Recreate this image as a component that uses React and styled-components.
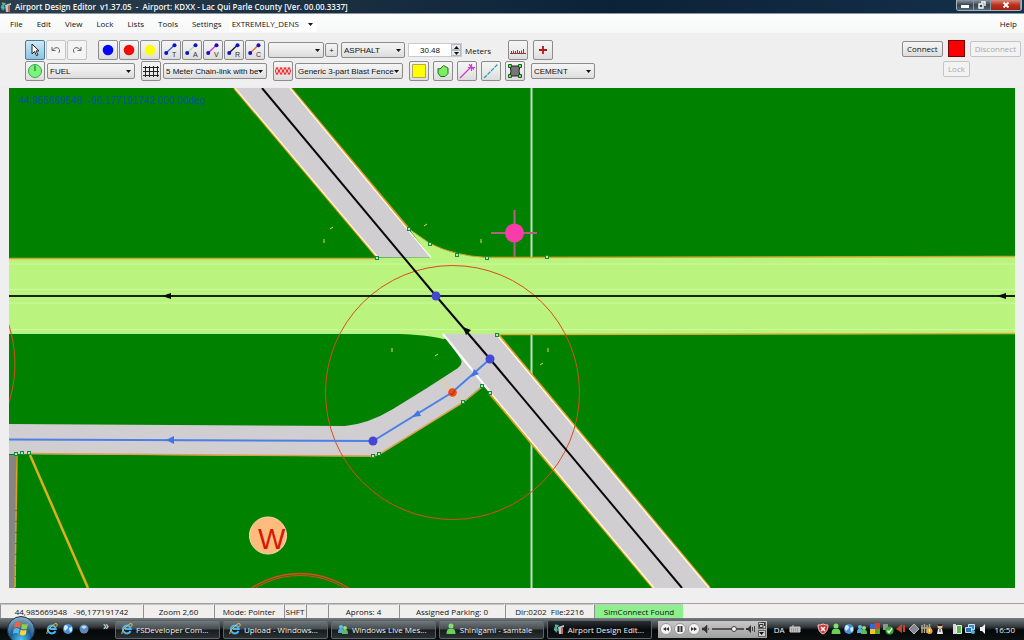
import React, { useState } from 'react'
import styled, { createGlobalStyle, css } from 'styled-components'

const menuItems = ['File', 'Edit', 'View', 'Lock', 'Lists', 'Tools', 'Settings']

const linkTools = [
  { letter: 'T', color: '#2f62ee' },
  { letter: 'A', color: '#9fe29f' },
  { letter: 'V', color: '#d030d8' },
  { letter: 'R', color: '#101020' },
  { letter: 'C', color: '#f06030' },
]

const nodeTools = [
  { name: 'Blue node', color: '#0505f5' },
  { name: 'Red node', color: '#f80505' },
  { name: 'Yellow node', color: '#fdfd05' },
]

const tasks = [
  { text: 'FSDeveloper Com...', icon: 'ie' },
  { text: 'Upload - Windows...', icon: 'ie' },
  { text: 'Windows Live Mes...', icon: 'people' },
  { text: 'Shinigami - samtale', icon: 'person' },
  { text: 'Airport Design Edit...', icon: 'app', active: true },
]

const handles = [
  [409, 229], [430, 244], [457, 255], [487, 258], [547, 257], [377, 258],
  [497, 335], [482, 386], [490, 393], [463, 402], [373, 456], [379, 454],
  [16, 454], [22, 453], [29, 453],
]

const nodes = [[436, 296], [490, 359], [373, 441]]

const ticks = [
  'M324 239v4', 'M330 229l3-2', 'M424 226l3-2', 'M481 239v4',
  'M392 348v4', 'M435 356l3-2', 'M548 348v4', 'M540 365l3-2',
]

export default function App() {
  const [width, setWidth] = useState('30.48')

  return (
    <Window>
      <GlobalStyle />
      <TitleBar>
        <AppIcon />
        <Title>Airport Design Editor&nbsp; v1.37.05&nbsp; -&nbsp; Airport: KDXX - Lac Qui Parle County [Ver. 00.00.3337]</Title>
        <WindowButtons>
          <WindowButton aria-label='Minimize'>
            <svg width='8' height='8' viewBox='0 0 8 8'><path d='M0 4h8v3H0z' fill='#fff' /></svg>
          </WindowButton>
          <WindowButton aria-label='Restore'>
            <svg width='8' height='8' viewBox='0 0 8 8'>
              <path d='M3 1h4v4M1 3h4v4H1z' fill='none' stroke='#fff' strokeWidth='1.4' />
            </svg>
          </WindowButton>
          <WindowButton aria-label='Close' $close>
            <svg width='8' height='8' viewBox='0 0 8 8'>
              <path d='M1.5 1.5l5 5M6.5 1.5l-5 5' stroke='#fff' strokeWidth='1.8' />
            </svg>
          </WindowButton>
        </WindowButtons>
      </TitleBar>

      <MenuBar>
        {menuItems.map((el) => (
          <MenuButton key={el}>{el}</MenuButton>
        ))}
        <Combo label='Scenery density' value='EXTREMELY_DENS' width={88} flat />
        <Spacer />
        <MenuButton>Help</MenuButton>
      </MenuBar>

      <ToolBar>
        <ToolRows>
          <ToolRow $gap={3}>
            <Group $gap={1}>
              <ToolButton aria-label='Pointer' $active>
                <svg width='12' height='14' viewBox='0 0 12 14'>
                  <path d='M3 1v10l2.5-2.500 2 4.200 1.500-.8-2-4h3z' fill='#fff' stroke='#222' strokeWidth='1' />
                </svg>
              </ToolButton>
              <ToolButton aria-label='Undo' $pale>
                <svg width='12' height='12' viewBox='0 0 12 12'>
                  <path d='M2 3v3.500h3.500M2.500 6C5 2.500 10 3 9.500 7c-.1 1-.5 1.600-1 2' fill='none' stroke='#666' />
                </svg>
              </ToolButton>
              <ToolButton aria-label='Redo' $pale>
                <svg width='12' height='12' viewBox='0 0 12 12'>
                  <path d='M10 3v3.500H6.500M9.500 6C7 2.500 2 3 2.500 7c.1 1 .5 1.600 1 2' fill='none' stroke='#666' />
                </svg>
              </ToolButton>
            </Group>
            <NodeGroup $gap={1}>
              {nodeTools.map((el) => (
                <ToolButton key={el.name} aria-label={el.name}>
                  <svg width='12' height='12' viewBox='0 0 12 12'>
                    <circle cx='6' cy='6' r='5.3' fill={el.color} />
                  </svg>
                </ToolButton>
              ))}
              {linkTools.map((el) => (
                <ToolButton key={el.letter} aria-label={'Link ' + el.letter}>
                  <svg width='16' height='16' viewBox='0 0 16 16'>
                    <path d='M3 11l8-7.500' stroke={el.color} strokeWidth='1.3' />
                    <circle cx='3.2' cy='11' r='2' fill='#1010c8' />
                    <circle cx='11.5' cy='3.2' r='2' fill='#1010c8' />
                    <text x='9' y='15' fontSize='7' fill='#333' fontFamily='Liberation Sans, sans-serif'>{el.letter}</text>
                  </svg>
                </ToolButton>
              ))}
            </NodeGroup>
            <Group $gap={1}>
              <Combo label='Name' value='' width={56} />
              <SmallButton aria-label='Add name'>+</SmallButton>
            </Group>
            <Combo label='Surface' value='ASPHALT' width={64} />
            <Group $gap={3}>
              <Spinner>
                <SpinnerInput id='width' value={width} onChange={(e) => setWidth(e.target.value)} />
                <SpinnerArrows>
                  <ArrowButton aria-label='Increase'><Triangle up /></ArrowButton>
                  <ArrowButton aria-label='Decrease'><Triangle /></ArrowButton>
                </SpinnerArrows>
              </Spinner>
              <label htmlFor='width'>Meters</label>
            </Group>
            <RulerGroup $gap={5}>
              <ToolButton aria-label='Ruler'>
                <svg width='16' height='14' viewBox='0 0 16 14'>
                  <path d='M0 10.500h16M1.500 10V8M3.500 10V7.500M5.500 10V8M7.500 10V7M9.500 10V8M11.500 10V7.500M13.500 10V6' stroke='#a83030' fill='none' />
                </svg>
              </ToolButton>
              <ToolButton aria-label='Cross'>
                <svg width='12' height='12' viewBox='0 0 12 12'>
                  <path d='M6 2v8M2 6h8' stroke='#b01818' strokeWidth='1.8' />
                </svg>
              </ToolButton>
            </RulerGroup>
          </ToolRow>

          <ToolRow $gap={6}>
            <Group $gap={2}>
              <ToolButton aria-label='Parking'>
                <svg width='16' height='16' viewBox='0 0 16 16'>
                  <circle cx='8' cy='8' r='6.5' fill='#7bf47b' stroke='#3aa84a' />
                  <path d='M8 8V2.500' stroke='#186028' />
                </svg>
              </ToolButton>
              <Combo label='Parking type' value='FUEL' width={88} />
            </Group>
            <Group $gap={2}>
              <ToolButton aria-label='Fence'>
                <svg width='16' height='14' viewBox='0 0 16 14'>
                  <path d='M0 3.500h16M0 7.500h16M0 11.500h16M2.500 2v11M6.500 2v11M10.500 2v11M14.500 2v11' stroke='#222' />
                </svg>
              </ToolButton>
              <Combo label='Fence type' value='5 Meter Chain-link with be' width={104} />
            </Group>
            <Group $gap={2}>
              <ToolButton aria-label='Blast fence'>
                <svg width='16' height='8' viewBox='0 0 16 8'>
                  <path d='M0 0h16v8H0z' fill='#fac4c4' />
                  <path d='M1 1.500h15M1 6.500h15' stroke='#e83434' strokeWidth='2' strokeDasharray='2 2' />
                  <path d='M-1 4h17' stroke='#e83434' strokeWidth='3' strokeDasharray='2 2' />
                </svg>
              </ToolButton>
              <Combo label='Blast fence type' value='Generic 3-part Blast Fence' width={108} />
            </Group>
            <Group $gap={4}>
              <ToolButton aria-label='Filled area'>
                <svg width='16' height='16' viewBox='0 0 16 16'><path d='M1.500 1.500h13v13h-13z' fill='#ffff00' stroke='#b0a860' /></svg>
              </ToolButton>
              <ToolButton aria-label='Polygon'>
                <svg width='16' height='16' viewBox='0 0 16 16'>
                  <path d='M3 5.500l2 .5 3.500-3.500L13 5v5.500L10 13.500H5.500L3 10z' fill='#7af060' stroke='#2a6a20' />
                </svg>
              </ToolButton>
              <ToolButton aria-label='Line'>
                <svg width='16' height='16' viewBox='0 0 16 16'>
                  <path d='M1 15L12 4M9 4.500h7M12.500 1v7M10 1.500l5 5' stroke='#cf35d5' fill='none' strokeWidth='1.2' />
                </svg>
              </ToolButton>
              <ToolButton aria-label='Dashed line'>
                <svg width='16' height='16' viewBox='0 0 16 16'>
                  <path d='M1 15L15 1' stroke='#2aa0a8' strokeWidth='1.3' strokeDasharray='4 1' />
                </svg>
              </ToolButton>
              <ToolButton aria-label='Apron'>
                <svg width='16' height='16' viewBox='0 0 16 16'>
                  <path d='M3 3h10l-1 5 1 5H3l1-5z' fill='#777' stroke='#222' />
                  <path d='M1.500 1.500h3v3h-3zM11.500 1.500h3v3h-3zM1.500 11.500h3v3h-3zM11.500 11.500h3v3h-3z' fill='#80d080' stroke='#186018' />
                </svg>
              </ToolButton>
            </Group>
            <Combo label='Apron surface' value='CEMENT' width={64} />
          </ToolRow>
        </ToolRows>

        <ConnectPanel>
          <ToolRow $gap={5}>
            <PushButton>Connect</PushButton>
            <ConnectionState />
            <PushButton disabled>Disconnect</PushButton>
          </ToolRow>
          <LockRow>
            <PushButton disabled>Lock</PushButton>
          </LockRow>
        </ConnectPanel>
      </ToolBar>

      <MapArea>
        <AirportMap />
      </MapArea>

      <StatusBar>
        <StatusCell $width={142}>44,985669548&nbsp;&nbsp; -96,177191742</StatusCell>
        <StatusCell $width={70}>Zoom 2,60</StatusCell>
        <StatusCell $width={69}>Mode: Pointer</StatusCell>
        <StatusCell $width={21}>SHFT</StatusCell>
        <StatusCell $width={21} />
        <StatusCell $width={70}>Aprons: 4</StatusCell>
        <StatusCell $width={105}>Assigned Parking: 0</StatusCell>
        <StatusCell $width={88}>Dir:0202&nbsp; File:2216</StatusCell>
        <StatusCell $width={89} $found>SimConnect Found</StatusCell>
      </StatusBar>

      <TaskBar>
        <StartButton aria-label='Start'>
          <svg width='28' height='24' viewBox='0 0 28 24'>
            <defs>
              <radialGradient id='orb' cx='.5' cy='.85' r='.8'>
                <stop offset='0' stopColor='#48c8f0' />
                <stop offset='.5' stopColor='#1d5c92' />
                <stop offset='1' stopColor='#8aa8bc' />
              </radialGradient>
            </defs>
            <circle cx='14' cy='14' r='13.5' fill='url(#orb)' stroke='#14344e' />
            <path d='M8 7q3-2 6 0l-1 5q-3-2-6 0z' fill='#f0623a' />
            <path d='M15 7.500q3 2 6 0l-1 5q-3 2-6 0z' fill='#8fd04a' />
            <path d='M6.700 13q3-2 6 0l-1 5q-3-2-6 0z' fill='#52b4f0' />
            <path d='M13.700 13.500q3 2 6 0l-1 5q-3 2-6 0z' fill='#ffd23c' />
          </svg>
        </StartButton>
        <QuickLaunch>
          <TrayIcon name='ie' />
          <TrayIcon name='globe' />
          <TrayIcon name='disc' />
          <More>»</More>
        </QuickLaunch>
        <Tasks>
          {tasks.map((el) => (
            <TaskButton key={el.text} $active={el.active}>
              {el.icon === 'app' ? <AppIcon /> : <TrayIcon name={el.icon} />}
              <TaskText>{el.text}</TaskText>
            </TaskButton>
          ))}
        </Tasks>
        <Player>
          <RoundButton aria-label='Previous'>
            <svg width='8' height='8' viewBox='0 0 8 8'><path d='M4 2v4L1 4zM7 2v4L4 4z' fill='#333' /></svg>
          </RoundButton>
          <RoundButton aria-label='Pause'>
            <svg width='8' height='8' viewBox='0 0 8 8'><path d='M1.500 1h2v6h-2zM4.500 1h2v6h-2z' fill='#333' /></svg>
          </RoundButton>
          <RoundButton aria-label='Next'>
            <svg width='8' height='8' viewBox='0 0 8 8'><path d='M1 2v4l3-2zM4 2v4l3-2z' fill='#333' /></svg>
          </RoundButton>
          <svg width='8' height='8' viewBox='0 0 8 8'>
            <path d='M0 3h2l3-3v8L2 5H0zM6.500 3v2' fill='#333' stroke='#333' strokeWidth='.6' />
          </svg>
          <Volume type='range' aria-label='Volume' defaultValue='75' />
          <svg width='10' height='8' viewBox='0 0 10 8'>
            <path d='M0 3h2l3-3v8L2 5H0z' fill='#333' />
            <path d='M6.500 2v4M8.500 1v6' stroke='#444' fill='none' />
          </svg>
          <PlayerCorner>
            <CornerButton aria-label='Restore player'>
              <svg width='6' height='6' viewBox='0 0 6 6'><path d='M2 .5h3.500V4M.5 2.500H4v3H.5z' fill='none' stroke='#333' /></svg>
            </CornerButton>
            <CornerButton aria-label='Player menu'><Triangle /></CornerButton>
          </PlayerCorner>
        </Player>
        <Language>DA</Language>
        <Keyboard width='12' height='8' viewBox='0 0 12 8'>
          <path d='M1 2h10v5H1zM4 2V0' fill='#bbb' stroke='#ccc' />
          <path d='M2 4h8M2 6h8' stroke='#888' strokeDasharray='1 1' />
        </Keyboard>
        <Tray>
          {['shield', 'person', 'globe', 'people', 'windows', 'check', 'horn', 'diamond', 'fence', 'penguin'].map((el) => (
            <TrayIcon key={el} name={el} />
          ))}
        </Tray>
        <Tray>
          {['battery', 'network', 'speaker'].map((el) => (
            <TrayIcon key={el} name={el} />
          ))}
        </Tray>
        <Clock>16:50</Clock>
      </TaskBar>
    </Window>
  )
}

function Combo({ label, value, width, flat }) {
  return (
    <ComboBox $width={width} $flat={flat}>
      <ComboSelect aria-label={label} defaultValue={value}>
        <option value={value}>{value}</option>
      </ComboSelect>
      <ComboArrow><Triangle /></ComboArrow>
    </ComboBox>
  )
}

function Triangle({ up }) {
  return (
    <svg width='5' height='3' viewBox='0 0 5 3'>
      <path d={up ? 'M0 3h5L2.500 0z' : 'M0 0h5L2.500 3z'} fill='#111' />
    </svg>
  )
}

function AppIcon() {
  return (
    <svg width='12' height='12' viewBox='0 0 12 12'>
      <path d='M1 5q2-4 5-3l-2 3 1 2-2 3z' fill='#49a7b8' />
      <path d='M2 2l3 1M1 7l3-1' stroke='#58c070' strokeWidth='1.5' />
      <path d='M5 4l6-2v2L8 5v6H6z' fill='#b8c8d0' />
      <path d='M8 5h2v6H8z' fill='#d8603c' />
    </svg>
  )
}

function TrayIcon({ name }) {
  return (
    <svg width='12' height='12' viewBox='0 0 12 12'>
      {name === 'ie' && (
        <>
          <path d='M9.500 8A4 4 0 1 1 9.800 6H4' fill='none' stroke='#4cb4f0' strokeWidth='2' />
          <path d='M1 11Q0 9 5 4t6-3q.5.800-.5 2.500' fill='none' stroke='#f0c040' />
        </>
      )}
      {name === 'globe' && (
        <>
          <circle cx='6' cy='6' r='5' fill='#4a92d8' />
          <path d='M3 2q3 0 3 3l-3 3Q1 5 3 2zM7 5l3-1v4L8 9z' fill='#d4ecff' />
        </>
      )}
      {name === 'disc' && (
        <>
          <circle cx='6' cy='6' r='4.5' fill='#5d89b4' />
          <path d='M3 4q3-3 6 0L6 6z' fill='#c4dcf0' />
        </>
      )}
      {name === 'people' && (
        <>
          <circle cx='4' cy='4' r='2' fill='#6ac0e8' />
          <path d='M1 10q0-5 3-4 3-1 3 4z' fill='#5aa8d8' />
          <circle cx='8' cy='5' r='2' fill='#8fe080' />
          <path d='M5 11q0-5 3-4 3-1 3 4z' fill='#58c058' />
        </>
      )}
      {name === 'person' && (
        <>
          <circle cx='6' cy='3' r='2.5' fill='#84e070' />
          <path d='M1.500 11q0-6 4.500-5 4.500-1 4.500 5z' fill='#6ad058' />
        </>
      )}
      {name === 'shield' && (
        <>
          <path d='M1 2q3 0 5-1 2 1 5 1 0 7-5 9Q1 9 1 2z' fill='#d83434' stroke='#e8c8c8' />
          <path d='M4 4l4 4M8 4L4 8' stroke='#fff' strokeWidth='1.5' />
        </>
      )}
      {name === 'windows' && (
        <>
          <path d='M1 1h5v5H1z' fill='#3868d8' />
          <path d='M6 0h5v6H6z' fill='#e03c24' />
          <path d='M1 6h5v5H1z' fill='#f4c420' />
          <path d='M6 6h5v5H6z' fill='#48a838' />
        </>
      )}
      {name === 'check' && (
        <>
          <path d='M1 1h5v6H1z' fill='#8a9a8a' />
          <circle cx='7.5' cy='7.5' r='4' fill='#38a838' />
          <path d='M5.500 7.500l1.500 2 3-4' fill='none' stroke='#fff' strokeWidth='1.3' />
        </>
      )}
      {name === 'horn' && <path d='M1 6l6-5v9zM8 2h2v7H8z' fill='#c84428' />}
      {name === 'diamond' && <path d='M6 1l5 5-5 5-5-5z' fill='#858a90' stroke='#b0b4b8' />}
      {name === 'fence' && (
        <>
          <path d='M1 2v8M3.500 1v9M6 2v8M8.500 1v9M0 5h10' stroke='#b0a890' strokeWidth='1.5' />
          <circle cx='8.5' cy='8' r='3' fill='#f0a830' />
          <path d='M8.500 6v3' stroke='#fff' />
        </>
      )}
      {name === 'penguin' && (
        <>
          <circle cx='6' cy='3.5' r='2.5' fill='#e8c090' />
          <path d='M4 6h4l1 5H3z' fill='#e8e8e8' />
          <path d='M4 1h4v2H4zM5.500 6h1v3h-1z' fill='#302820' />
        </>
      )}
      {name === 'battery' && (
        <>
          <path d='M2 1h3v10H2z' fill='#d8d8d8' />
          <path d='M5.500 2.500h5v8h-5z' fill='#58b848' stroke='#eee' />
        </>
      )}
      {name === 'network' && (
        <>
          <path d='M4.500 1.500h6v5h-6z' fill='#3490d0' stroke='#cde' />
          <path d='M1.500 4.500h6v5h-6z' fill='#2870b8' stroke='#cde' />
          <circle cx='9' cy='9' r='2' fill='#40b8d8' />
        </>
      )}
      {name === 'speaker' && <path d='M3 4h2l3-3v10L5 8H3z' fill='#f0f0f0' />}
    </svg>
  )
}

function AirportMap() {
  return (
    <MapSvg viewBox='9 88 1006 500' preserveAspectRatio='xMidYMid slice' role='img' aria-label='Airport map'>
      <text x='18' y='104' fontSize='10' fill='#0052a0' fontFamily='Liberation Sans, sans-serif'>
        44,985669548&#160;&#160;-96,177191742 000,00deg
      </text>

      {/* meridian */}
      <path d='M531.500 88v500' stroke='#c4dcc4' strokeWidth='2' />

      {/* runway with its fillets */}
      <path d='M9 258.500L377 258L431 257.500L409 229L430 243.500Q455 256 487 257.500L1015 256.500V334H500l-57 5q-14-4-43-5H9z' fill='#baf47f' />
      <path d='M9 264h1006M9 289.500h1006M9 303h1006M9 329.500h1006' stroke='#ccfa9e' fill='none' />
      <path d='M9 258.500h368M487 257.500l528-1' stroke='#c8a828' fill='none' strokeWidth='1.4' />
      <path d='M409 229L430 243.500Q455 256 487 257.500' stroke='#d0a020' fill='none' />
      <path d='M498 334.500l517-1' stroke='#d8b030' fill='none' strokeWidth='1.5' />
      <path d='M9 333.500h391' stroke='#a4f0a0' fill='none' />

      {/* taxiways */}
      <path
        d='M9 424L345 426Q368 424 393 409L427 388L458 368Q464 363 460 358L443 334H470L490 380L482 386L463 402L379 455L373 456.500L9 454z'
        fill='#d0ced0'
      />
      <path d='M234 88h57l140 169.500h-54z' fill='#d0ced0' />
      <path d='M443 334h54l213 254h-57L490 393z' fill='#d0ced0' />
      <path d='M234 88l143 169.500M291 88l118 141' stroke='#d89818' fill='none' strokeWidth='2' />
      <path d='M235 88l143 169.500M290 88l141 169.500' stroke='#fffbe8' fill='none' strokeWidth='1.3' />
      <path d='M498 334l212 254M489 393l164 195' stroke='#e0a020' fill='none' strokeWidth='2' />
      <path d='M497 335l212 253M490 392l164 196' stroke='#fffce8' fill='none' strokeWidth='1.4' />
      <path d='M443 334l47 58' stroke='#fff' strokeWidth='2' />
      <path d='M28 453.500L373 456L379 454.500L463 402.500L482 387' stroke='#dca050' fill='none' strokeWidth='1.5' />

      {/* apron edge in the corner */}
      <path d='M9 455h7v133H9z' fill='#858585' />
      <path d='M17 455l-2 133' stroke='#e0a020' fill='none' strokeWidth='1.5' />
      <path d='M16 510v78' stroke='#203880' strokeDasharray='1 10' />
      <path d='M30 455l58 133' stroke='#dcb01c' fill='none' strokeWidth='2.5' />

      {/* range circles */}
      <g fill='none' stroke='#dc4a1c'>
        <circle cx='452.5' cy='392.5' r='127' />
        <circle cx='-112' cy='364' r='127' />
        <circle cx='300' cy='661' r='87.5' strokeWidth='1.3' />
        <circle cx='300' cy='661' r='85.5' />
      </g>

      {/* centre lines */}
      <path d='M9 296h1006' stroke='#14240a' strokeWidth='2' />
      <path d='M262 88l174 208 54 63 192 229' stroke='#080808' fill='none' strokeWidth='2' />
      <path d='M162 296l9-3v6zM997 296l9-3v6zM463 327l8 3-5 5z' fill='#080808' />
      <path d='M490 359l-38 33.500L373 441 9 439.500' stroke='#4c7fe8' fill='none' strokeWidth='2' />
      <path d='M166 440l8-4v8zM412 417l6-7 3 6zM471 377l3-8 5 5z' fill='#4074e4' />

      <g stroke='#e8d84c' fill='none'>
        {ticks.map((el) => (
          <path key={el} d={el} />
        ))}
      </g>
      <path d='M441 380l20 22' stroke='#e8cc90' strokeWidth='5' strokeDasharray='1 2' />

      {nodes.map(([x, y]) => (
        <circle key={x} cx={x} cy={y} r='4.5' fill='#4446d4' />
      ))}
      <circle cx='452.5' cy='392.5' r='4.3' fill='#f04818' />
      <path d='M450 393l2 2 3-5' stroke='#a83010' fill='none' />

      <g fill='#b8e8b0' stroke='#158a3c'>
        {handles.map(([x, y]) => (
          <rect key={x + '-' + y} x={x - 1.5} y={y - 1.5} width='3' height='3' />
        ))}
      </g>

      <path d='M491 233h46M514.500 210v47' stroke='#b46080' strokeWidth='2' />
      <circle cx='514.5' cy='233' r='9.5' fill='#fa3caa' />

      <circle cx='268' cy='535.5' r='18.5' fill='#ffbc7c' stroke='#ffd8b0' />
      <text x='258' y='549' fontSize='29' fill='#d41808' fontFamily='Liberation Sans, sans-serif'>W</text>
    </MapSvg>
  )
}

const GlobalStyle = createGlobalStyle`
  * {
    box-sizing: border-box;
  }
  body {
    margin: 0;
    font-family: 'Open Sans', 'Noto Sans', sans-serif;
    font-size: 8px;
    color: #111;
  }
  button, input, select {
    font: inherit;
    color: inherit;
    margin: 0;
    padding: 0;
  }
  svg {
    flex: none;
    display: block;
  }
`

const Window = styled.div`
  display: flex;
  flex-direction: column;
  min-height: 100vh;
  background: #efefef;
`

const TitleBar = styled.header`
  display: flex;
  align-items: center;
  gap: 3px;
  height: 14px;
  border-bottom: 1px solid #8796a2;
  background: linear-gradient(90deg, #2c3e4c, #1b3040 30%, #0c2238 60%, #14304a);
`

const Title = styled.h1`
  margin: 0;
  color: #f4f8fa;
  font-size: 8px;
  font-weight: 600;
  line-height: 12px;
  white-space: pre;
`

const WindowButtons = styled.div`
  display: flex;
  align-self: flex-start;
  margin-left: auto;
  margin-right: 2px;
  border: 1px solid #a8b4bc;
  border-top: 0;
  border-radius: 0 0 3px 3px;
  overflow: hidden;
`

const WindowButton = styled.button`
  display: flex;
  align-items: center;
  justify-content: center;
  width: ${(p) => (p.$close ? 30 : 17)}px;
  height: 10px;
  border: 0;
  border-right: 1px solid #8c98a0;
  background: ${(p) =>
    p.$close
      ? 'linear-gradient(#d88a78, #b83020 50%, #a82010)'
      : 'linear-gradient(#8c98a4, #34444f 50%, #566672)'};
`

const MenuBar = styled.nav`
  display: flex;
  align-items: center;
  height: 19px;
  padding-left: 3px;
  background: linear-gradient(#fdfefd, #f6f7f7);
`

const MenuButton = styled.button`
  padding: 0 7px;
  border: 0;
  background: none;
  line-height: 14px;
`

const Spacer = styled.div`
  flex: 1;
`

const ToolBar = styled.section`
  display: flex;
  align-items: flex-start;
  justify-content: space-between;
  padding: 7px 3px 6px 25px;
  border-bottom: 1px solid #f4e8f2;
`

const ToolRows = styled.div`
  display: flex;
  flex-direction: column;
  gap: 1px;
`

const ToolRow = styled.div`
  display: flex;
  align-items: center;
  gap: ${(p) => p.$gap}px;
`

const Group = styled.div`
  display: flex;
  align-items: center;
  gap: ${(p) => p.$gap}px;
`

const NodeGroup = styled(Group)`
  margin-left: 8px;
`

const RulerGroup = styled(Group)`
  margin-left: 14px;
`

const button = css`
  border: 1px solid #8c8c8c;
  border-radius: 2px;
  background: linear-gradient(#f5f5f5, #ebebeb 50%, #dcdcdc);
`

const ToolButton = styled.button`
  display: flex;
  align-items: center;
  justify-content: center;
  width: 20px;
  height: 20px;
  ${button}
  ${(p) => p.$pale && 'background: #f4f4f4; border-color: #c4c4c4;'}
  ${(p) => p.$active && 'background: linear-gradient(#cfe8f6, #8cc4e4); border-color: #4a7c9a;'}
`

const SmallButton = styled.button`
  ${button}
  width: 13px;
  height: 14px;
  line-height: 10px;
`

const ComboBox = styled.div`
  position: relative;
  width: ${(p) => p.$width}px;
  height: 16px;
  ${button}
  font-family: 'Liberation Sans', sans-serif;
  ${(p) => p.$flat && css`
    border-color: #fff;
    background: #fff;
    font-family: 'Open Sans', sans-serif;
  `}
`

const ComboSelect = styled.select`
  display: block;
  width: 100%;
  height: 14px;
  padding: 0 8px 0 2px;
  border: 0;
  background: none;
  appearance: none;
`

const ComboArrow = styled.span`
  position: absolute;
  top: 6px;
  right: 3px;
  pointer-events: none;
`

const Spinner = styled.div`
  display: flex;
  width: 54px;
  height: 14px;
  border: 1px solid #c8ccd0;
  background: #fff;
`

const SpinnerInput = styled.input`
  flex: 1;
  min-width: 0;
  border: 0;
  background: none;
  text-align: center;
  font-family: 'Liberation Sans', sans-serif;
`

const SpinnerArrows = styled.div`
  display: flex;
  flex-direction: column;
`

const ArrowButton = styled.button`
  display: flex;
  align-items: center;
  justify-content: center;
  width: 10px;
  height: 6px;
  border: 1px solid #b4b8c0;
  background: #e8ecf2;
`

const ConnectPanel = styled.div`
  display: flex;
  flex-direction: column;
  gap: 4px;
`

const PushButton = styled.button`
  ${button}
  height: 16px;
  padding: 0 4px;
  line-height: 12px;

  &:disabled {
    color: #a8a8a8;
    border-color: #c4c4c4;
    background: #f3f3f3;
  }
`

const ConnectionState = styled.div`
  width: 17px;
  height: 17px;
  border: 1px solid #700;
  background: #fb0000;
`

const LockRow = styled.div`
  display: flex;
  justify-content: center;
  padding-right: 10px;
`

const MapArea = styled.main`
  position: relative;
  flex: 1;
  display: flex;
  min-height: 200px;
  margin: 0 9px 15px;
  background: #008200;
`

const MapSvg = styled.svg`
  position: absolute;
  inset: 0;
  width: 100%;
  height: 100%;
`

const StatusBar = styled.footer`
  display: flex;
  gap: 1px;
  height: 15px;
  border-top: 1px solid #a0a0a0;
  background: #f1efed;
`

const StatusCell = styled.div`
  width: ${(p) => p.$width}px;
  border-left: 1px solid #909090;
  border-top: 1px solid #c4c4c4;
  background: ${(p) => (p.$found ? '#8cf08c' : 'none')};
  line-height: 13px;
  text-align: center;
  white-space: pre;
`

const TaskBar = styled.div`
  display: flex;
  align-items: center;
  height: 22px;
  background: linear-gradient(#747c80, #32383c 40%, #050808 55%, #0c1010);
  color: #f0f0f0;
`

const StartButton = styled.button`
  align-self: flex-end;
  margin-left: 7px;
  border: 0;
  background: none;
`

const QuickLaunch = styled.div`
  display: flex;
  align-items: center;
  gap: 4px;
  width: 69px;
  margin-left: 11px;
`

const More = styled.span`
  margin-left: auto;
  padding-right: 6px;
  font-size: 12px;
  line-height: 12px;
  margin-bottom: 6px;
`

const Tasks = styled.div`
  display: flex;
  flex: 1;
  gap: 3px;
`

const TaskButton = styled.button`
  display: flex;
  flex: 1;
  align-items: center;
  gap: 3px;
  min-width: 0;
  height: 19px;
  padding: 0 5px;
  border: 1px solid #5c6468;
  border-radius: 2px;
  background: ${(p) =>
    p.$active
      ? 'linear-gradient(#2c3034, #080a0c 50%, #101214)'
      : 'linear-gradient(#71797d, #454b4f 48%, #181c1e 52%, #2a3034)'};
`

const TaskText = styled.span`
  white-space: nowrap;
`

const Player = styled.div`
  display: flex;
  align-items: center;
  gap: 2px;
  width: 109px;
  height: 17px;
  margin-left: 6px;
  padding: 0 1px 0 2px;
  background: linear-gradient(#c8c8c8, #a0a0a0);
`

const RoundButton = styled.button`
  display: flex;
  align-items: center;
  justify-content: center;
  width: 12px;
  height: 12px;
  border: 1px solid #999;
  border-radius: 50%;
  background: #f4f4f4;
`

const Volume = styled.input`
  flex: 1;
  min-width: 0;
  height: 8px;
  appearance: none;
  background: linear-gradient(transparent 3px, #555 3px, #555 5px, transparent 5px);

  &::-webkit-slider-thumb {
    appearance: none;
    width: 6px;
    height: 6px;
    border: 1px solid #444;
    border-radius: 50%;
    background: #eee;
  }
`

const PlayerCorner = styled.div`
  display: flex;
  flex-direction: column;
  gap: 1px;
`

const CornerButton = styled.button`
  display: flex;
  align-items: center;
  justify-content: center;
  width: 8px;
  height: 7px;
  border: 1px solid #666;
  background: #ccc;
`

const Language = styled.span`
  margin-left: 7px;
`

const Keyboard = styled.svg`
  margin: 0 16px 0 4px;
`

const Tray = styled.div`
  display: flex;
  gap: 1px;

  & + & {
    margin-left: 5px;
  }
`

const Clock = styled.time`
  margin: 0 9px 0 6px;
`
